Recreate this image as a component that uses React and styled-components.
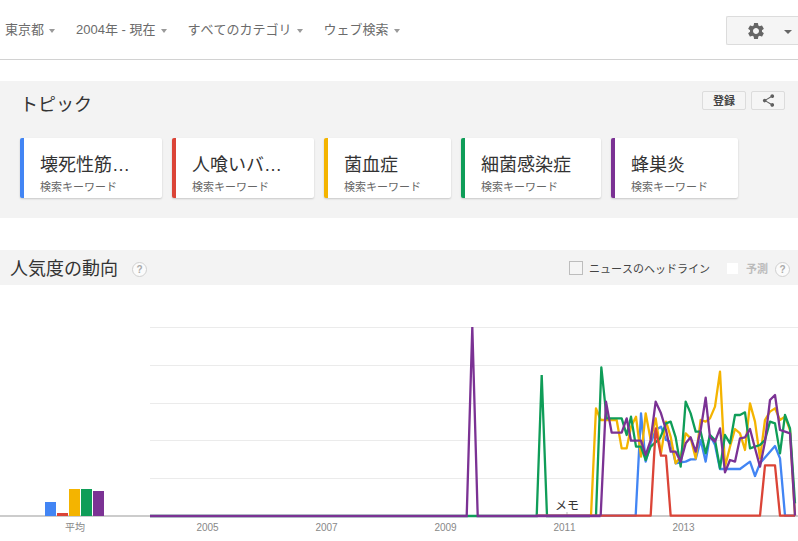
import React from "react";
import styled, { createGlobalStyle } from "styled-components";
import { MdSettings, MdShare } from "react-icons/md";

const FONT = `"Liberation Sans", "Noto Sans CJK JP", sans-serif`;

const Global = createGlobalStyle`
  html, body { margin: 0; padding: 0; background: #fff; overflow: hidden; }
  body { font-family: ${FONT}; font-kerning: none; }
`;

const Page = styled.div`
  width: 798px;
  height: 541px;
  overflow: hidden;
  display: flex;
  flex-direction: column;
`;

const TopBar = styled.div`
  height: 59px;
  flex: none;
  border-bottom: 1px solid #d2d2d2;
  display: flex;
  align-items: flex-start;
  justify-content: space-between;
  padding-left: 5px;
`;
const Filters = styled.div`
  display: flex;
  gap: 21px;
  padding-top: 21px;
`;
const Filter = styled.div`
  display: flex;
  align-items: center;
  gap: 5px;
  height: 17px;
  font-size: 13px;
  line-height: 17px;
  color: #6b6b6b;
  white-space: nowrap;
`;
const Caret = styled.span`
  width: 0;
  height: 0;
  margin-top: 2px;
  border-left: ${(p) => p.$half || 3.5}px solid transparent;
  border-right: ${(p) => p.$half || 3.5}px solid transparent;
  border-top: 4px solid ${(p) => p.$color || "#9a9a9a"};
`;
const GearButton = styled.div`
  margin-top: 16px;
  width: 72px;
  height: 29px;
  box-sizing: border-box;
  border: 1px solid #dcdcdc;
  border-right: none;
  border-radius: 2px 0 0 2px;
  background: #f5f5f5;
  display: flex;
  align-items: center;
  color: #666;
  padding-left: 19px;
  gap: 18px;
`;

const TopicSection = styled.section`
  margin-top: 21px;
  height: 137px;
  flex: none;
  box-sizing: border-box;
  background: #f3f3f3;
  padding: 10px 13px 0 20px;
`;
const TopicHead = styled.div`
  display: flex;
  justify-content: space-between;
  align-items: flex-start;
`;
const SectionTitle = styled.h2`
  margin: ${(p) => p.$mt || 0}px 0 0;
  font-size: 18px;
  font-weight: 400;
  line-height: 24px;
  color: #333;
`;
const Actions = styled.div`
  display: flex;
  gap: 5px;
`;
const SmallButton = styled.div`
  height: 19px;
  width: ${(p) => p.$w}px;
  box-sizing: border-box;
  border: 1px solid #dcdcdc;
  border-radius: 2px;
  background: #f5f5f5;
  display: flex;
  align-items: center;
  justify-content: center;
  padding-bottom: 1px;
  font-size: 11px;
  font-weight: 700;
  color: #444;
`;
const ShareGlyph = styled(MdShare)`
  color: #5f5f5f;
`;
const Cards = styled.div`
  display: flex;
  gap: 10px;
  margin-top: 21px;
`;
const Card = styled.div`
  width: ${(p) => p.$w}px;
  height: 60px;
  box-sizing: border-box;
  background: #fff;
  border-left: 4px solid ${(p) => p.$color};
  border-radius: 2px;
  box-shadow: 0 1px 2px rgba(0, 0, 0, 0.18);
  padding: 15px 0 0 16px;
`;
const CardTitle = styled.div`
  font-size: 18px;
  line-height: 24px;
  color: #333;
  white-space: nowrap;
`;
const CardSub = styled.div`
  margin-top: 3px;
  font-size: 11px;
  line-height: 14px;
  color: #666;
  white-space: nowrap;
`;

const TrendHead = styled.section`
  margin-top: 32px;
  height: 35px;
  flex: none;
  box-sizing: border-box;
  background: #f3f3f3;
  display: flex;
  align-items: center;
  padding: 1px 8px 0 10px;
`;
const Help = styled.span`
  width: 13px;
  height: 13px;
  margin-left: ${(p) => p.$ml || 0}px;
  margin-top: ${(p) => p.$mt || 0}px;
  border: 1px solid #d0d0d0;
  border-radius: 50%;
  background: #fbfbfb;
  display: inline-flex;
  align-items: center;
  justify-content: center;
  font-size: 10px;
  font-weight: 700;
  color: #aaa;
`;
const Options = styled.div`
  margin-left: auto;
  display: flex;
  align-items: center;
`;
const Check = styled.span`
  width: ${(p) => (p.$off ? 11 : 12)}px;
  height: ${(p) => (p.$off ? 11 : 12)}px;
  background: ${(p) => (p.$off ? "#fff" : "#f5f5f5")};
  border: 1px solid ${(p) => (p.$off ? "#f3f3f3" : "#bdbdbd")};
`;
const OptionLabel = styled.span`
  margin-left: ${(p) => p.$ml}px;
  margin-right: ${(p) => p.$mr}px;
  font-size: 11px;
  color: ${(p) => (p.$off ? "#bbb" : "#444")};
  font-weight: ${(p) => (p.$off ? 700 : 400)};
  white-space: nowrap;
`;

const ChartSvg = styled.svg`
  display: block;
  flex: none;
`;
const AxisText = styled.text`
  font-family: ${FONT};
  font-size: 10px;
  fill: #888;
  text-anchor: middle;
`;
const NoteText = styled.text`
  font-family: ${FONT};
  font-size: 12px;
  fill: #333;
  text-anchor: middle;
`;

const COLORS = {
  blue: "#4285f4",
  red: "#db4437",
  yellow: "#f4b400",
  green: "#0f9d58",
  purple: "#7b3294",
};

const TOPICS = [
  ["壊死性筋…", COLORS.blue, 142],
  ["人喰いバ…", COLORS.red, 142],
  ["菌血症", COLORS.yellow, 127],
  ["細菌感染症", COLORS.green, 140],
  ["蜂巣炎", COLORS.purple, 127],
];

const BARS = [
  [45, 502, COLORS.blue],
  [57, 513, COLORS.red],
  [69, 489, COLORS.yellow],
  [81, 489, COLORS.green],
  [93, 491, COLORS.purple],
];

// Points read in a 3x crop whose origin is (580, 350).
const toPage = (pts) => pts.map(([x, y]) => `${580 + x / 3},${350 + y / 3}`).join(" ");

const SERIES = [
  {
    color: COLORS.blue,
    pts: [[-130, 497], [167, 497], [183, 190], [197, 335], [212, 280], [227, 240], [243, 230], [258, 270], [272, 275], [287, 340], [302, 337], [317, 335], [332, 328], [347, 328], [362, 270], [377, 335], [390, 255], [405, 285], [420, 357], [480, 357], [510, 335], [525, 378], [540, 340], [585, 288], [600, 325], [615, 497], [645, 497]],
  },
  {
    color: COLORS.yellow,
    pts: [[33, 497], [48, 175], [62, 210], [110, 210], [125, 295], [140, 295], [153, 230], [168, 200], [183, 320], [197, 190], [212, 270], [227, 205], [243, 310], [258, 215], [272, 260], [287, 340], [302, 320], [317, 250], [332, 265], [347, 325], [362, 210], [377, 215], [390, 205], [405, 170], [420, 65], [435, 350], [450, 290], [465, 237], [480, 250], [495, 300], [510, 160], [525, 215], [540, 325], [555, 210], [570, 185], [585, 175], [600, 210], [615, 200], [630, 240], [645, 497]],
  },
  {
    color: COLORS.green,
    pts: [[48, 497], [64, 52], [80, 205], [125, 205], [140, 255], [153, 200], [168, 290], [183, 290], [197, 330], [212, 290], [240, 265], [258, 220], [272, 215], [287, 262], [302, 350], [317, 155], [332, 190], [347, 245], [362, 245], [377, 310], [390, 255], [405, 270], [420, 355], [435, 255], [450, 280], [465, 195], [480, 195], [495, 187], [510, 295], [525, 290], [540, 285], [555, 270], [570, 215], [585, 220], [600, 310], [615, 195], [630, 235], [645, 460]],
  },
  {
    color: COLORS.red,
    pts: [[-130, 497], [212, 497], [227, 235], [243, 317], [258, 317], [272, 497], [540, 497], [555, 346], [585, 346], [600, 497], [645, 497]],
  },
  {
    color: COLORS.purple,
    pts: [[62, 497], [78, 155], [95, 248], [125, 248], [140, 205], [153, 272], [183, 272], [197, 315], [212, 270], [227, 155], [243, 190], [258, 240], [272, 305], [287, 305], [302, 335], [317, 280], [332, 262], [347, 305], [362, 240], [377, 143], [390, 262], [405, 275], [420, 235], [435, 367], [450, 330], [465, 335], [480, 265], [495, 262], [510, 237], [525, 295], [540, 350], [555, 275], [570, 150], [585, 135], [600, 240], [615, 245], [630, 250], [645, 497]],
  },
];

function Chart() {
  return (
    <ChartSvg width="798" height="256" viewBox="0 285 798 256">
      {[327, 365, 403, 440, 478].map((y) => (
        <line key={y} x1="150" x2="798" y1={y + 0.5} y2={y + 0.5} stroke="#ebebeb" />
      ))}
      <line x1="0" x2="798" y1="516" y2="516" stroke="#999" />
      <line x1="567" x2="567" y1="512" y2="516" stroke="#bbb" />
      {BARS.map(([x, y, c]) => (
        <rect key={x} x={x} y={y} width="11" height={516 - y} fill={c} />
      ))}
      <polyline points="150,516 536.7,516 541.7,375 547,516 590,516" fill="none" stroke={COLORS.green} strokeWidth="2.3" />
      {SERIES.map((s) => (
        <polyline key={s.color} points={toPage(s.pts)} fill="none" stroke={s.color} strokeWidth="2.3" strokeLinejoin="round" />
      ))}
      <polyline points="150,516 466.7,516 472.3,327 477.7,516 600.5,516" fill="none" stroke={COLORS.purple} strokeWidth="2.3" />
      <NoteText x="567" y="510">メモ</NoteText>
      <AxisText x="75" y="531">平均</AxisText>
      {[[207.5, 2005], [326.5, 2007], [445.5, 2009], [564.5, 2011], [683.5, 2013]].map(([x, t]) => (
        <AxisText key={t} x={x} y="531">{t}</AxisText>
      ))}
    </ChartSvg>
  );
}

export default function App() {
  return (
    <Page lang="ja">
      <Global />
      <TopBar>
        <Filters>
          {["東京都", "2004年 - 現在", "すべてのカテゴリ", "ウェブ検索"].map((t) => (
            <Filter key={t}>
              {t}
              <Caret />
            </Filter>
          ))}
        </Filters>
        <GearButton>
          <MdSettings size={20} />
          <Caret $color="#666" $half={4} />
        </GearButton>
      </TopBar>

      <TopicSection>
        <TopicHead>
          <SectionTitle $mt={2}>トピック</SectionTitle>
          <Actions>
            <SmallButton $w={44}>登録</SmallButton>
            <SmallButton $w={34}>
              <ShareGlyph size={15} />
            </SmallButton>
          </Actions>
        </TopicHead>
        <Cards>
          {TOPICS.map(([name, color, w]) => (
            <Card key={name} $color={color} $w={w}>
              <CardTitle>{name}</CardTitle>
              <CardSub>検索キーワード</CardSub>
            </Card>
          ))}
        </Cards>
      </TopicSection>

      <TrendHead>
        <SectionTitle $mt={2}>人気度の動向</SectionTitle>
        <Help $ml={14} $mt={2}>?</Help>
        <Options>
          <Check />
          <OptionLabel $ml={6} $mr={16}>ニュースのヘッドライン</OptionLabel>
          <Check $off />
          <OptionLabel $ml={7} $mr={7} $off>予測</OptionLabel>
          <Help $mt={2}>?</Help>
        </Options>
      </TrendHead>

      <Chart />
    </Page>
  );
}
